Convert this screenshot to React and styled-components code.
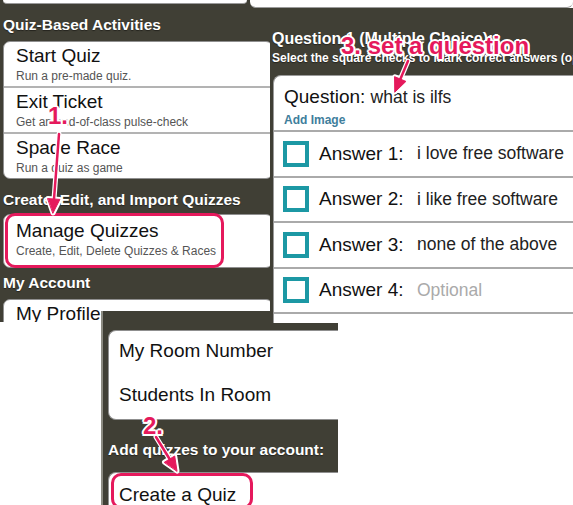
import React from 'react';
import styled, { createGlobalStyle } from 'styled-components';

const GlobalStyle = createGlobalStyle`
  html, body {
    margin: 0;
    padding: 0;
    background: #ffffff;
  }
  body {
    font-family: "Liberation Sans", Arial, sans-serif;
  }
`;

const DARK = '#403f35';
const PINK = '#e5195c';
const TEAL = '#1c98a4';

const leftMenu = [
  { title: 'Start Quiz', sub: 'Run a pre-made quiz.' },
  { title: 'Exit Ticket', sub: 'Get an end-of-class pulse-check' },
  { title: 'Spade Race', sub: 'Run a quiz as game' },
];

const answers = [
  { label: 'Answer 1:', value: 'i love free software' },
  { label: 'Answer 2:', value: 'i like free software' },
  { label: 'Answer 3:', value: 'none of the above' },
  { label: 'Answer 4:', value: 'Optional', empty: true },
  { label: 'Answer 5:', value: 'Optional', empty: true },
];

const App = () => {
  return (
    <>
      <GlobalStyle />
      <Canvas>
        {/* left window: activities menu */}
        <Window $left={0} $top={0} $width={273} $height={322} $z={1}>
          <MenuColumn>
            <TopStub $width={244} $radius={5} $height={4} />
            <SectionTitle $mt={12}>Quiz-Based Activities</SectionTitle>
            <MenuCard $mt={7}>
              {leftMenu.map((item) => (
                <MenuItem key={item.title}>
                  <ItemTitle>{item.title}</ItemTitle>
                  <ItemSub>{item.sub}</ItemSub>
                </MenuItem>
              ))}
            </MenuCard>
            <SectionTitle $mt={12}>Create, Edit, and Import Quizzes</SectionTitle>
            <MenuCard $mt={5}>
              <MenuItem $pt={4} $pb={8}>
                <Highlight $left={1} $top={-2} $width={219} $height={55} />
                <ItemTitle>Manage Quizzes</ItemTitle>
                <ItemSub>Create, Edit, Delete Quizzes &amp; Races</ItemSub>
              </MenuItem>
            </MenuCard>
            <SectionTitle $mt={6}>My Account</SectionTitle>
            <MenuCard $mt={7}>
              <MenuItem $pt={2}>
                <ItemTitle>My Profile</ItemTitle>
                <ItemSub>Update your account</ItemSub>
              </MenuItem>
            </MenuCard>
          </MenuColumn>
        </Window>

        {/* bottom window: room + create */}
        <Window $left={101} $top={311} $width={237} $height={194} $z={2} $edge>
          <RoomColumn>
            <RoomCard>
              <RoomItem>My Room Number</RoomItem>
              <RoomItem>Students In Room</RoomItem>
            </RoomCard>
            <SectionTitle $mt={21}>Add quizzes to your account:</SectionTitle>
            <RoomCard $mt={13}>
              <RoomItem $pt={10}>
                <Highlight $left={2} $top={0} $width={142} $height={36} />
                Create a Quiz
              </RoomItem>
            </RoomCard>
          </RoomColumn>
        </Window>

        {/* right window: question editor */}
        <Window $left={250} $top={0} $width={323} $height={323} $z={3} $clear>
          <EditorColumn>
            <TopStub $height={8} $radius={6} />
            <EditorBody>
              <QuestionTitle>Question 1 (Multiple Choice):</QuestionTitle>
              <QuestionHint>Select the square checks to mark correct answers (optional)</QuestionHint>
              <EditorCard>
                <QuestionHead>
                  <QuestionLine>
                    Question: <QuestionValue>what is ilfs</QuestionValue>
                  </QuestionLine>
                  <AddImage>Add Image</AddImage>
                </QuestionHead>
                {answers.map((a) => (
                  <AnswerRow key={a.label}>
                    <CheckBox />
                    <AnswerLabel>{a.label}</AnswerLabel>
                    <AnswerValue $empty={a.empty}>{a.value}</AnswerValue>
                  </AnswerRow>
                ))}
              </EditorCard>
            </EditorBody>
          </EditorColumn>
        </Window>

        {/* annotations */}
        <Callout $left={48} $top={104}>1.</Callout>
        <Callout $left={143} $top={414}>2.</Callout>
        <Callout $left={341} $top={34}>3. set a question</Callout>
        <ArrowLayer width="573" height="505" viewBox="0 0 573 505">
          <g stroke="#ffffff" strokeWidth="5" strokeLinecap="round" fill="#ffffff" strokeLinejoin="round">
            <line x1="59" y1="134" x2="54" y2="199" />
            <polygon points="53,213 59.9,199.4 47.9,198.6" />
            <line x1="156" y1="437" x2="169.6" y2="459" />
            <polygon points="177,471 174.7,456 164.5,462.2" />
            <line x1="408" y1="61" x2="400.4" y2="79" />
            <polygon points="395,92 405.9,81.4 394.9,76.8" />
          </g>
          <g stroke={PINK} strokeWidth="2.5" strokeLinecap="round" fill={PINK} strokeLinejoin="round">
            <line x1="59" y1="134" x2="54" y2="199" />
            <polygon points="53,213 59.9,199.4 47.9,198.6" strokeWidth="1" />
            <line x1="156" y1="437" x2="169.6" y2="459" />
            <polygon points="177,471 174.7,456 164.5,462.2" strokeWidth="1" />
            <line x1="408" y1="61" x2="400.4" y2="79" />
            <polygon points="395,92 405.9,81.4 394.9,76.8" strokeWidth="1" />
          </g>
        </ArrowLayer>
      </Canvas>
    </>
  );
};

export default App;

// Styled Components

const Canvas = styled.div`
  position: relative;
  width: 573px;
  height: 505px;
  overflow: hidden;
  background: #ffffff;
`;

const Window = styled.section`
  position: absolute;
  left: ${(p) => p.$left}px;
  top: ${(p) => p.$top}px;
  width: ${(p) => p.$width}px;
  height: ${(p) => p.$height}px;
  z-index: ${(p) => p.$z};
  background: ${(p) => (p.$clear ? 'transparent' : DARK)};
  border-left: ${(p) => (p.$edge ? '2px solid #8c8b82' : 'none')};
  box-sizing: border-box;
  overflow: hidden;
`;

const MenuColumn = styled.div`
  display: flex;
  flex-direction: column;
  padding-left: 3px;
`;

const TopStub = styled.div`
  height: ${(p) => p.$height}px;
  width: ${(p) => (p.$width ? `${p.$width}px` : 'auto')};
  background: #ffffff;
  border-bottom: 1px solid #9a9a9a;
  border-radius: 0 0 ${(p) => p.$radius}px ${(p) => p.$radius}px;
  box-sizing: border-box;
  flex-shrink: 0;
`;

const SectionTitle = styled.h3`
  margin: ${(p) => p.$mt}px 0 0 0;
  font-size: 15.5px;
  line-height: 18px;
  font-weight: 700;
  color: #ffffff;
  white-space: nowrap;
  text-shadow: 0 1px 1px rgba(0, 0, 0, 0.45);
`;

const MenuCard = styled.div`
  margin-top: ${(p) => p.$mt}px;
  background: #ffffff;
  border: 1px solid #8f8f8f;
  border-radius: 7px;
`;

const MenuItem = styled.div`
  position: relative;
  display: flex;
  flex-direction: column;
  padding: ${(p) => p.$pt ?? 2}px 12px ${(p) => p.$pb ?? 2}px 12px;
  border-bottom: 2px solid #b3b3b3;

  &:last-child {
    border-bottom: none;
  }
`;

const ItemTitle = styled.div`
  font-size: 19px;
  line-height: 24px;
  color: #111111;
  white-space: nowrap;
`;

const ItemSub = styled.div`
  margin-top: 1px;
  font-size: 12px;
  line-height: 15px;
  color: #555555;
  white-space: nowrap;
`;

const Highlight = styled.div`
  position: absolute;
  left: ${(p) => p.$left}px;
  top: ${(p) => p.$top}px;
  width: ${(p) => p.$width}px;
  height: ${(p) => p.$height}px;
  border: 3px solid ${PINK};
  border-radius: 10px;
  box-sizing: border-box;
  pointer-events: none;
`;

const RoomColumn = styled.div`
  display: flex;
  flex-direction: column;
  padding: 19px 0 0 5px;
`;

const RoomCard = styled.div`
  margin-top: ${(p) => p.$mt ?? 0}px;
  background: #ffffff;
  border: 1px solid #8f8f8f;
  border-right: none;
  border-radius: 8px 0 0 8px;
`;

const RoomItem = styled.div`
  position: relative;
  height: 44px;
  box-sizing: border-box;
  padding: ${(p) => p.$pt ?? 8}px 0 0 10px;
  font-size: 19px;
  line-height: 24px;
  color: #111111;
  white-space: nowrap;
`;

const EditorColumn = styled.div`
  display: flex;
  flex-direction: column;
  height: 100%;
`;

const EditorBody = styled.div`
  flex: 1;
  margin-left: 20px;
  padding-left: 2px;
  background: ${DARK};
  overflow: hidden;
  display: flex;
  flex-direction: column;
`;

const QuestionTitle = styled.h3`
  margin: 21px 0 0 0;
  font-size: 16px;
  line-height: 20px;
  font-weight: 700;
  color: #ffffff;
  white-space: nowrap;
  text-shadow: 0 1px 1px rgba(0, 0, 0, 0.45);
`;

const QuestionHint = styled.div`
  margin-top: 2px;
  font-size: 12px;
  line-height: 14px;
  font-weight: 700;
  color: #ffffff;
  white-space: nowrap;
  text-shadow: 0 1px 1px rgba(0, 0, 0, 0.45);
`;

const EditorCard = styled.div`
  margin: 10px 0 0 1px;
  background: #ffffff;
  border-top: 1px solid #9a9a9a;
  border-left: 1px solid #9a9a9a;
  border-top-left-radius: 8px;
  flex-shrink: 0;
`;

const QuestionHead = styled.div`
  padding: 9px 0 3px 10px;
  border-bottom: 2px solid #aaaaaa;
`;

const QuestionLine = styled.div`
  font-size: 19px;
  line-height: 24px;
  color: #111111;
  white-space: nowrap;
`;

const QuestionValue = styled.span`
  font-size: 17.5px;
  color: #222222;
`;

const AddImage = styled.div`
  margin-top: 4px;
  font-size: 12px;
  line-height: 14px;
  font-weight: 700;
  color: #407e9c;
`;

const AnswerRow = styled.div`
  display: flex;
  align-items: center;
  height: 45.5px;
  box-sizing: border-box;
  padding-left: 9px;
  border-bottom: 2px solid #aaaaaa;
`;

const CheckBox = styled.span`
  width: 26px;
  height: 26px;
  box-sizing: border-box;
  border: 4px solid ${TEAL};
  background: #ffffff;
  flex-shrink: 0;
`;

const AnswerLabel = styled.span`
  width: 98px;
  margin-left: 10px;
  font-size: 19px;
  color: #111111;
  white-space: nowrap;
  flex-shrink: 0;
`;

const AnswerValue = styled.span`
  font-size: 17.5px;
  color: ${(p) => (p.$empty ? '#aaaaaa' : '#222222')};
  white-space: nowrap;
`;

const Callout = styled.div`
  position: absolute;
  left: ${(p) => p.$left}px;
  top: ${(p) => p.$top}px;
  z-index: 10;
  font-size: 24px;
  line-height: 24px;
  font-weight: 700;
  color: ${PINK};
  white-space: nowrap;
  text-shadow:
    2px 0 0 #fff, -2px 0 0 #fff, 0 2px 0 #fff, 0 -2px 0 #fff,
    1.5px 1.5px 0 #fff, -1.5px 1.5px 0 #fff, 1.5px -1.5px 0 #fff, -1.5px -1.5px 0 #fff;
`;

const ArrowLayer = styled.svg`
  position: absolute;
  left: 0;
  top: 0;
  z-index: 9;
  pointer-events: none;
`;
